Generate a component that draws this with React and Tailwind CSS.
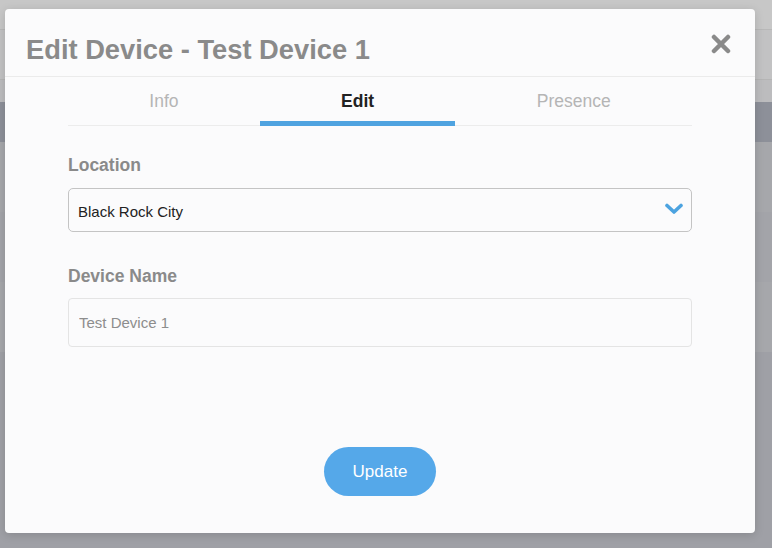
import React, { useState } from 'react';

const tabs = ['Info', 'Edit', 'Presence'];

const CloseIcon = () => (
  <svg width="20" height="20" viewBox="0 0 20 20" fill="none">
    <path
      d="M3 3L17 17M17 3L3 17"
      stroke="#8a8a8a"
      strokeWidth="4.5"
      strokeLinecap="round"
    />
  </svg>
);

const Chevron = () => (
  <svg width="18" height="12" viewBox="0 0 18 12" fill="none">
    <path
      d="M2 2.5L9 9L16 2.5"
      stroke="#4ca3e0"
      strokeWidth="3.6"
      strokeLinecap="round"
      strokeLinejoin="round"
    />
  </svg>
);

// page that sits behind the dim overlay
const BackgroundPage = () => (
  <div className="flex h-[548px] w-full flex-col">
    <div className="h-[30px] border-b border-[#b8b8b8] bg-[#c7c7c7]" />
    <div className="h-[50px] border-b border-[#b5b5b5] bg-[#c2c2c3]" />
    <div className="h-[22px] bg-[#bcbcbe]" />
    <div className="h-[40px] bg-[#8d9099]" />
    <div className="h-[70px] bg-[#a6a7ab]" />
    <div className="h-[70px] bg-[#a3a4a9]" />
    <div className="h-[70px] bg-[#a6a7ab]" />
    <div className="flex-1 bg-[#9fa0a6]" />
  </div>
);

const App = () => {
  const [active, setActive] = useState('Edit');
  const [location, setLocation] = useState('Black Rock City');
  const [name, setName] = useState('');

  return (
    <div className="relative h-[548px] w-full overflow-hidden font-['Liberation_Sans',Arial,sans-serif]">
      <BackgroundPage />

      <div className="absolute left-[5px] top-[9px] flex h-[524px] w-[750px] flex-col rounded-[4px] bg-[#fbfbfc] shadow-[0_2px_10px_rgba(0,0,0,0.15)]">
        <div className="flex h-[68px] items-start justify-between border-b border-[#ebebeb] pl-[21px] pr-[24px]">
          <h1 className="mt-[27px] text-[27.3px] font-bold leading-none text-[#8a8a8a]">
            Edit Device - Test Device 1
          </h1>
          <button className="mt-[25px]">
            <CloseIcon />
          </button>
        </div>

        <div className="flex flex-1 flex-col px-[63px]">
          <div className="flex border-b border-[#ececec]">
            {tabs.map((tab) => (
              <button
                key={tab}
                onClick={() => setActive(tab)}
                className={
                  active === tab
                    ? 'flex h-[49px] flex-auto items-center justify-center -mb-px pt-[4px] border-b-[5px] border-[#4fa3e0] text-[17.5px] font-bold text-[#222]'
                    : 'flex h-[49px] flex-auto items-center justify-center -mb-px pt-[4px] border-b-[5px] border-transparent text-[17.5px] text-[#b5b5b5]'
                }
              >
                {tab}
              </button>
            ))}
          </div>

          <label className="mt-[31px] block text-[17.5px] font-bold leading-none text-[#8a8a8a]">
            Location
          </label>
          <div className="relative mt-[13px]">
            <select
              value={location}
              onChange={(e) => setLocation(e.target.value)}
              className="h-[44px] w-full appearance-none rounded-[5px] border border-[#c4c4c4] bg-[#fbfbfc] pl-[9px] pt-[5px] text-[15px] text-[#222] outline-none"
            >
              <option>Black Rock City</option>
              <option>San Francisco</option>
            </select>
            <div className="pointer-events-none absolute right-[9px] top-[15px]">
              <Chevron />
            </div>
          </div>

          <label className="mt-[36px] block text-[17.5px] font-bold leading-none text-[#8a8a8a]">
            Device Name
          </label>
          <input
            type="text"
            value={name}
            onChange={(e) => setName(e.target.value)}
            placeholder="Test Device 1"
            className="mt-[13px] h-[49px] w-full rounded-[4px] border border-[#e4e4e4] bg-[#fbfbfc] pl-[10px] text-[15px] text-[#222] outline-none placeholder:text-[#8d8d8d]"
          />

          <div className="mt-[100px] flex justify-center">
            <button className="h-[49px] w-[112px] rounded-full bg-[#55a8e9] text-[17px] text-white">
              Update
            </button>
          </div>
        </div>
      </div>
    </div>
  );
};

export default App;
